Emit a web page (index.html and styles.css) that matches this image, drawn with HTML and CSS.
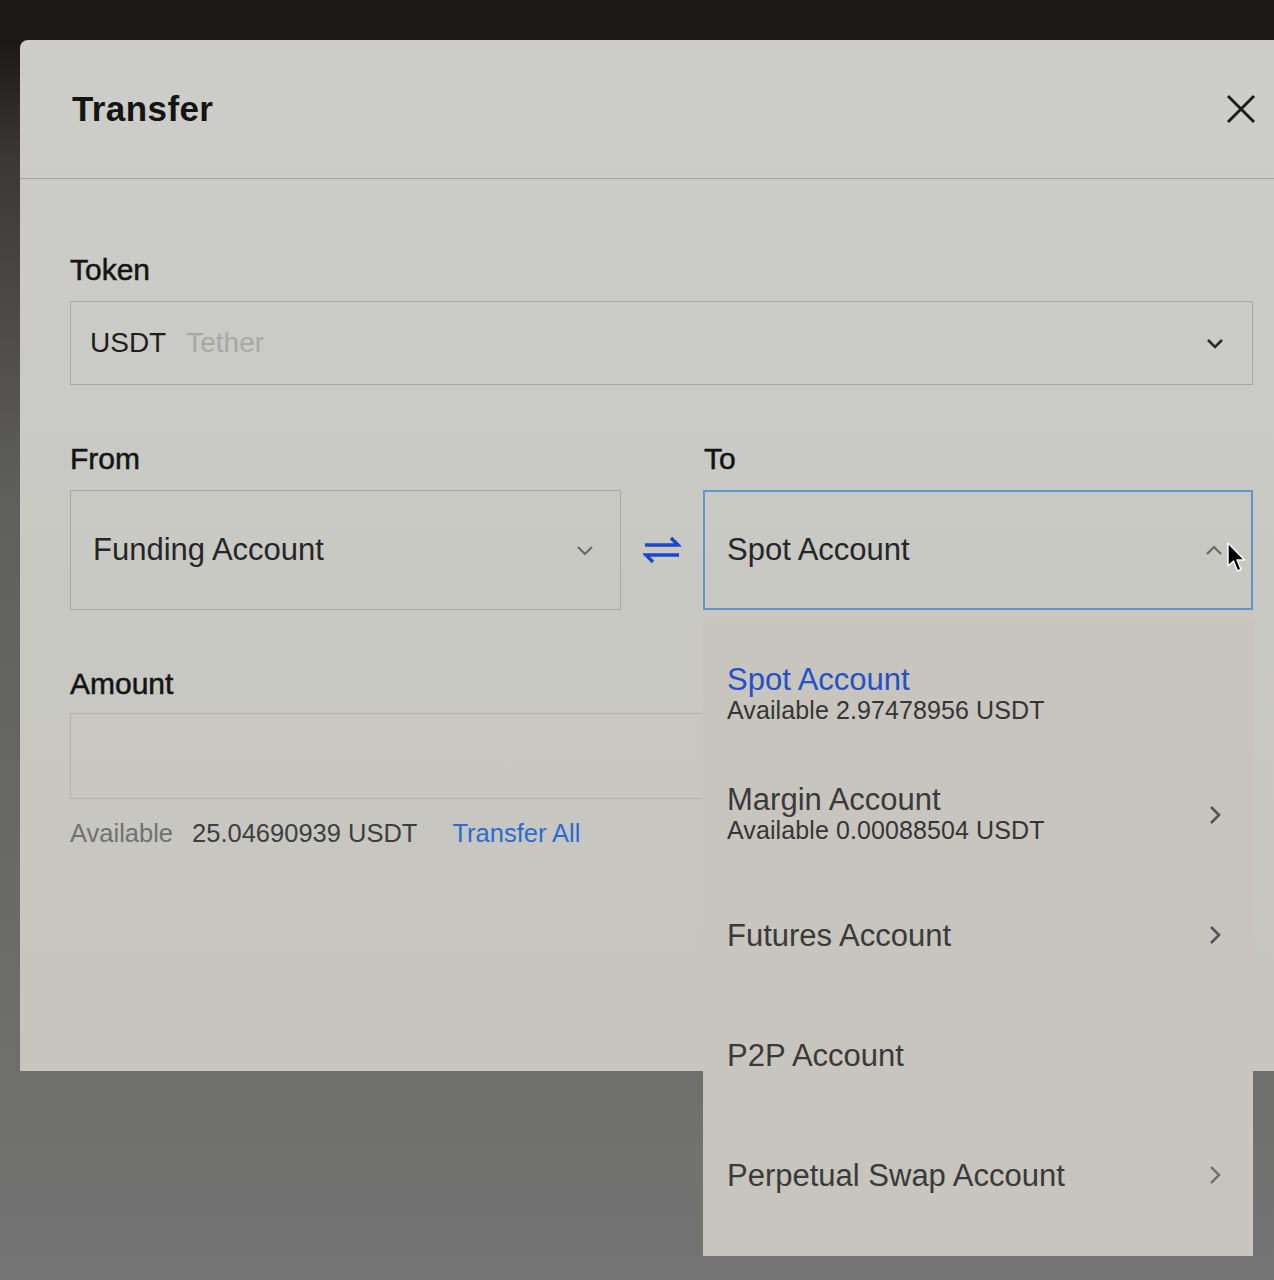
FILE: index.html
```html
<!DOCTYPE html>
<html lang="en">
<head>
<meta charset="utf-8">
<title>Transfer</title>
<link rel="stylesheet" href="styles.css">
</head>
<body>
<div class="screen">
  <section class="modal">
    <header class="modal-head">
      <h1 class="title">Transfer</h1>
      <button class="close" aria-label="Close">
        <svg width="30" height="30" viewBox="0 0 30 30"><path d="M2 2 L28 28 M28 2 L2 28" stroke="#1d1d1d" stroke-width="3" fill="none"/></svg>
      </button>
    </header>
    <div class="modal-body">
      <div class="label">Token</div>
      <div class="field token-field">
        <span class="token-code">USDT</span>
        <span class="token-name">Tether</span>
        <svg class="chev chev-down dark" width="18" height="11" viewBox="0 0 18 11"><path d="M2 2 L9 9 L16 2" fill="none" stroke-width="2.6"/></svg>
      </div>

      <div class="pair">
        <div class="col">
          <div class="label">From</div>
          <div class="field select">
            <span class="select-text">Funding Account</span>
            <svg class="chev grey" width="18" height="11" viewBox="0 0 18 11"><path d="M2 2 L9 9 L16 2" fill="none" stroke-width="2.2"/></svg>
          </div>
        </div>
        <div class="swap">
          <svg width="38" height="30" viewBox="0 0 38 30"><path d="M2 10 H35 L28 3" fill="none" stroke="#1d47c9" stroke-width="3.4" stroke-linejoin="miter"/><path d="M36 20 H3 L10 27" fill="none" stroke="#1d47c9" stroke-width="3.4" stroke-linejoin="miter"/></svg>
        </div>
        <div class="col">
          <div class="label label-to">To</div>
          <div class="to-wrap">
            <div class="field select active">
              <span class="select-text">Spot Account</span>
              <svg class="chev grey" width="18" height="11" viewBox="0 0 18 11"><path d="M2 9 L9 2 L16 9" fill="none" stroke-width="2.2"/></svg>
              <svg class="cursor" width="20" height="32" viewBox="0 0 20 32"><path d="M1 1 L1 24 L6.5 19 L10.5 29 L14 27.5 L10 18 L17.5 18 Z" fill="#000" stroke="#fff" stroke-width="1.4" stroke-linejoin="round"/></svg>
            </div>
            <ul class="menu">
              <li class="item selected">
                <div class="item-text">
                  <span class="item-title">Spot Account</span>
                  <span class="item-sub">Available 2.97478956 USDT</span>
                </div>
              </li>
              <li class="item">
                <div class="item-text">
                  <span class="item-title">Margin Account</span>
                  <span class="item-sub">Available 0.00088504 USDT</span>
                </div>
                <svg class="chev-r" width="12" height="20" viewBox="0 0 12 20"><path d="M2 2 L10 10 L2 18" fill="none" stroke-width="2.6"/></svg>
              </li>
              <li class="item">
                <div class="item-text"><span class="item-title">Futures Account</span></div>
                <svg class="chev-r" width="12" height="20" viewBox="0 0 12 20"><path d="M2 2 L10 10 L2 18" fill="none" stroke-width="2.6"/></svg>
              </li>
              <li class="item">
                <div class="item-text"><span class="item-title">P2P Account</span></div>
              </li>
              <li class="item">
                <div class="item-text"><span class="item-title">Perpetual Swap Account</span></div>
                <svg class="chev-r light" width="12" height="20" viewBox="0 0 12 20"><path d="M2 2 L10 10 L2 18" fill="none" stroke-width="2.4"/></svg>
              </li>
            </ul>
          </div>
        </div>
      </div>

      <div class="label label-amount">Amount</div>
      <div class="field amount-field"></div>
      <div class="avail-row">
        <span class="avail-label">Available</span>
        <span class="avail-value">25.04690939 USDT</span>
        <a class="transfer-all">Transfer All</a>
      </div>
    </div>
  </section>
</div>
</body>
</html>
```

FILE: styles.css
```css
* { box-sizing: border-box; }
html, body { margin: 0; padding: 0; }
body {
  width: 1274px;
  height: 1280px;
  overflow: hidden;
  font-family: "Liberation Sans", Arial, sans-serif;
  background: linear-gradient(to bottom, #1b1815 0, #1b1815 40px, #3b3936 160px, #5f5f5d 500px, #6f6f6e 1080px, #747474 1280px);
}
.screen {
  padding-top: 40px;
  padding-left: 20px;
}
.modal {
  width: 1254px;
  height: 1031px;
  border-top-left-radius: 8px;
  background: linear-gradient(to bottom, #cdcdca 0, #c9c9c5 400px, #c6c5bf 1031px);
}
.modal-head {
  height: 139px;
  display: flex;
  align-items: center;
  justify-content: space-between;
  padding: 0 18px 0 52px;
  border-bottom: 1px solid #a4a4a0;
}
.title {
  margin: 0;
  font-size: 35px;
  font-weight: 700;
  color: #141414;
  letter-spacing: 0.4px;
}
.close {
  border: 0;
  background: none;
  padding: 0;
  width: 30px;
  height: 30px;
  display: flex;
}
.modal-body {
  padding: 74px 21px 0 50px;
}
.label {
  font-size: 30px;
  line-height: 34px;
  color: #141414;
  -webkit-text-stroke: 0.5px #141414;
}
.field {
  border: 1px solid #a9a8a3;
  display: flex;
  align-items: center;
}
.token-field {
  margin-top: 14px;
  height: 84px;
  padding: 0 28px 0 19px;
}
.token-code {
  font-size: 28px;
  color: #1e1e1e;
}
.token-name {
  font-size: 28px;
  color: #a8a8a4;
  margin-left: 20px;
}
.chev { margin-left: auto; }
.chev path { stroke: #333; }
.chev.dark path { stroke: #2a2a2a; }
.chev.grey path { stroke: #6a6a6a; }
.pair {
  margin-top: 57px;
  display: grid;
  grid-template-columns: 551px 82px 550px;
}
.col { display: flex; flex-direction: column; }
.label-to { padding-left: 1px; }
.select {
  margin-top: 14px;
  height: 120px;
  padding: 0 26px 0 22px;
}
.select-text {
  font-size: 31px;
  color: #262626;
}
.swap {
  display: flex;
  align-items: flex-end;
  justify-content: center;
  padding-bottom: 45px;
}
.to-wrap { position: relative; }
.select.active {
  border: 2px solid #6393cb;
  padding-left: 22px;
  padding-right: 28px;
  position: relative;
}
.cursor {
  position: absolute;
  right: 4px;
  top: 50px;
}
.menu {
  position: absolute;
  left: 0;
  right: 0;
  top: calc(100% + 8px);
  height: 638px;
  margin: 0;
  padding: 17px 0 21px;
  list-style: none;
  background: #c7c5be;
  z-index: 5;
}
.item {
  height: 120px;
  display: flex;
  align-items: center;
  padding: 0 32px 0 24px;
}
.item-text {
  display: flex;
  flex-direction: column;
}
.item-title {
  font-size: 31px;
  line-height: 31px;
  color: #3a3a3a;
}
.item-sub {
  font-size: 25px;
  line-height: 31px;
  color: #353535;
  letter-spacing: 0.1px;
}
.item.selected .item-title { color: #2551c6; }
.chev-r { margin-left: auto; }
.chev-r path { stroke: #555; }
.chev-r.light path { stroke: #6d6d6d; }
.label-amount { margin-top: 57px; }
.amount-field {
  margin-top: 12px;
  height: 86px;
  border-color: #b4b3ae;
}
.avail-row {
  margin-top: 19px;
  display: flex;
  align-items: center;
  font-size: 25.5px;
  line-height: 30px;
}
.avail-label { color: #717171; }
.avail-value { color: #3e3e3e; margin-left: 19px; }
.transfer-all { color: #2b6cd2; margin-left: 35px; }
```
